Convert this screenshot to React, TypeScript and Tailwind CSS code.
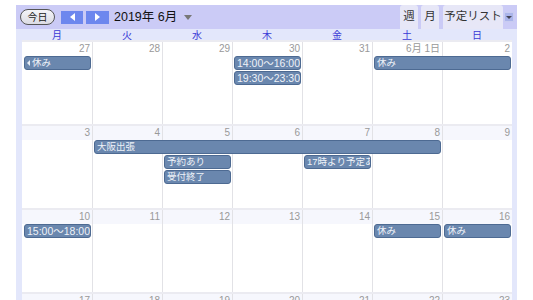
import React from "react";

const FONT = { fontFamily: '"Liberation Sans", "Noto Sans CJK JP", sans-serif' };

type Ev = { label: string; col: number; span: number; row: number; cont?: boolean; time?: boolean };

const weeks: { nums: string[]; events: Ev[]; strip: boolean }[] = [
  {
    strip: false,
    nums: ["27", "28", "29", "30", "31", "6月 1日", "2"],
    events: [
      { label: "休み", col: 1, span: 1, row: 2, cont: true },
      { label: "14:00～16:00", col: 4, span: 1, row: 2, time: true },
      { label: "19:30～23:30", col: 4, span: 1, row: 3, time: true },
      { label: "休み", col: 6, span: 2, row: 2 },
    ],
  },
  {
    strip: true,
    nums: ["3", "4", "5", "6", "7", "8", "9"],
    events: [
      { label: "大阪出張", col: 2, span: 5, row: 2 },
      { label: "予約あり", col: 3, span: 1, row: 3 },
      { label: "受付終了", col: 3, span: 1, row: 4 },
      { label: "17時より予定あり", col: 5, span: 1, row: 3 },
    ],
  },
  {
    strip: true,
    nums: ["10", "11", "12", "13", "14", "15", "16"],
    events: [
      { label: "15:00～18:00", col: 1, span: 1, row: 2, time: true },
      { label: "休み", col: 6, span: 1, row: 2 },
      { label: "休み", col: 7, span: 1, row: 2 },
    ],
  },
  {
    strip: true,
    nums: ["17", "18", "19", "20", "21", "22", "23"],
    events: [],
  },
];

const colStart = ["", "col-start-1", "col-start-2", "col-start-3", "col-start-4", "col-start-5", "col-start-6", "col-start-7"];
const colSpan = ["", "col-span-1", "col-span-2", "col-span-3", "col-span-4", "col-span-5", "col-span-6", "col-span-7"];
const rowStart = ["", "row-start-1", "row-start-2", "row-start-3", "row-start-4", "row-start-5"];

function Week({ nums, events, strip }: { nums: string[]; events: Ev[]; strip: boolean }) {
  return (
    <div className="grid grid-cols-7 grid-rows-[14px_15px_15px_15px_1fr] h-[84px] border-t-2 border-[#ebebf1] bg-white">
      <div className={`col-start-1 col-span-7 row-start-1 ${strip ? "bg-[#f6f7fd]" : "bg-white"}`} />
      {nums.map((n, i) => (
        <div
          key={"c" + i}
          className={`${colStart[i + 1]} row-start-1 row-span-5 ${i > 0 ? "border-l border-[#e2e2e6]" : ""}`}
        />
      ))}
      {nums.map((n, i) => (
        <div
          key={"n" + i}
          className={`${colStart[i + 1]} row-start-1 text-right pr-[2px] text-[10px] leading-[14px] text-[#999]`}
        >
          {n}
        </div>
      ))}
      {events.map((e, i) => (
        <div
          key={"e" + i}
          className={`${colStart[e.col]} ${colSpan[e.span]} ${rowStart[e.row]} ml-[2px] mr-[1px] h-[14px] bg-[#6a87ae] border border-[#4d6a92] rounded-[3px] ${e.time ? "text-[10.5px]" : "text-[9.5px]"} leading-[12px] text-[#eef2f8] pl-[2px] overflow-hidden whitespace-nowrap flex items-center`}
        >
          {e.cont && (
            <span className="inline-block shrink-0 w-0 h-0 border-y-[3px] border-y-transparent border-r-[3px] border-r-[#e8eef6] mr-[2px]" />
          )}
          {e.label}
        </div>
      ))}
    </div>
  );
}

export default function App() {
  const days = ["月", "火", "水", "木", "金", "土", "日"];
  return (
    <div className="w-[533px] h-[300px] overflow-hidden bg-white pt-[5px] pl-4" style={FONT}>
      <div className="w-[501px]">
        {/* toolbar */}
        <div className="h-[24px] bg-[#cbcbf6] flex items-center">
          <div className="ml-1 h-[16px] w-[35px] rounded-full border border-[#555] bg-gradient-to-b from-[#f4f4f8] to-[#dcdce4] flex items-center justify-center text-[10px] text-[#222]">
            今日
          </div>
          <div className="ml-[6px] h-[13px] w-[22px] bg-[#6d87ee] flex items-center justify-center">
            <span className="w-0 h-0 border-y-[4px] border-y-transparent border-r-[5px] border-r-white" />
          </div>
          <div className="ml-[3px] h-[13px] w-[23px] bg-[#6d87ee] flex items-center justify-center">
            <span className="w-0 h-0 border-y-[4px] border-y-transparent border-l-[5px] border-l-white" />
          </div>
          <div className="ml-[5px] text-[12.5px] text-[#111]">2019年 6月</div>
          <span className="ml-[7px] w-0 h-0 border-x-[4px] border-x-transparent border-t-[5px] border-t-[#777]" />
          <div className="flex-1" />
          <div className="self-stretch flex items-stretch gap-[3px]">
            <div className="w-[18px] bg-[#e7e7f7] rounded-t-[3px] flex items-center justify-center text-[11.5px] text-[#333]">週</div>
            <div className="w-[18px] bg-[#e7e7f7] rounded-t-[3px] flex items-center justify-center text-[11.5px] text-[#333]">月</div>
            <div className="ml-[1px] w-[60px] bg-[#e7e7f7] rounded-t-[3px] flex items-center justify-center text-[11.5px] text-[#333]">予定リスト</div>
          </div>
          <div className="ml-[1px] mr-[3px] w-[10px] h-[10px] bg-[#aab4ea] border border-[#c8ccf0] flex items-center justify-center">
            <span className="w-0 h-0 border-x-[3px] border-x-transparent border-t-[3px] border-t-[#445]" />
          </div>
        </div>
        {/* day names */}
        <div className="h-[13px] bg-[#e3e7fb] pl-[6px] pr-[5px] grid grid-cols-7">
          {days.map((d) => (
            <div key={d} className="text-center text-[10px] leading-[13px] text-[#3a3ad6]">
              {d}
            </div>
          ))}
        </div>
        {/* body */}
        <div className="bg-[#e3e7fb] pl-[6px] pr-[5px] -mt-[2px]">
          {weeks.map((w, i) => (
            <Week key={i} nums={w.nums} events={w.events} strip={w.strip} />
          ))}
        </div>
      </div>
    </div>
  );
}
